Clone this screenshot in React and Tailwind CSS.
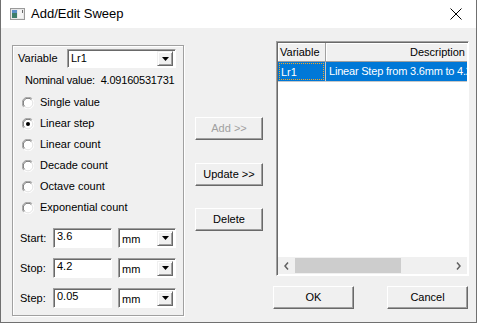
import React from "react";

const font = { fontFamily: '"Liberation Sans", Arial, sans-serif' };

function Radio({ checked }) {
    return (
        <svg width="12" height="12" viewBox="0 0 12 12" className="shrink-0">
            <circle cx="6" cy="6" r="5.5" fill="#ffffff" />
            <path d="M1.8 10.2 A5.5 5.5 0 0 1 10.2 1.8" fill="none" stroke="#a0a0a0" strokeWidth="1" />
            <path d="M10.2 1.8 A5.5 5.5 0 0 1 1.8 10.2" fill="none" stroke="#ffffff" strokeWidth="1" />
            <path d="M2.6 9.4 A4.6 4.6 0 0 1 9.4 2.6" fill="none" stroke="#696969" strokeWidth="1" />
            <path d="M9.4 2.6 A4.6 4.6 0 0 1 2.6 9.4" fill="none" stroke="#e3e3e3" strokeWidth="1" />
            {checked && <circle cx="6" cy="6" r="2" fill="#000000" />}
        </svg>
    );
}

function DropButton() {
    return (
        <div className="w-[16px] h-[15px] bg-[#f0f0f0] border border-t-[#f0f0f0] border-l-[#f0f0f0] border-b-[#696969] border-r-[#696969] shadow-[inset_1px_1px_0_#ffffff,inset_-1px_-1px_0_#a0a0a0] flex items-center justify-center">
            <svg width="7" height="4" viewBox="0 0 7 4">
                <path d="M0 0 H7 L3.5 4 Z" fill="#000000" />
            </svg>
        </div>
    );
}

function Combo({ value, width }) {
    return (
        <div
            className={`h-[19px] bg-white border border-t-[#a0a0a0] border-l-[#a0a0a0] border-b-white border-r-white shadow-[inset_1px_1px_0_#696969] flex items-center justify-between pl-[3px] pr-[2px] ${width}`}
        >
            <span className="text-[11px] leading-none text-black">{value}</span>
            <DropButton />
        </div>
    );
}

function UnitCombo() {
    return (
        <div className="w-[58px] h-[20px] bg-white border border-t-[#a0a0a0] border-l-[#a0a0a0] border-b-white border-r-white shadow-[inset_1px_1px_0_#696969] flex items-center justify-between pl-[3px] pr-[2px]">
            <span className="text-[11px] leading-none text-black pt-[3px]">mm</span>
            <DropButton />
        </div>
    );
}

function Field({ label, value }) {
    return (
        <div className="flex items-center h-[20px]">
            <span className="w-[40px] pl-[7px] text-[11px] text-black">{label}</span>
            <div className="w-[59px] h-[20px] bg-white border border-t-[#a0a0a0] border-l-[#a0a0a0] border-b-white border-r-white shadow-[inset_1px_1px_0_#696969] pl-[3px] text-[11px] leading-[15px] text-black">
                {value}
            </div>
            <div className="ml-[6px]">
                <UnitCombo />
            </div>
        </div>
    );
}

function Button({ children, disabled, className = "" }) {
    return (
        <div
            className={`h-[23px] bg-[#f0f0f0] border border-t-white border-l-white border-b-[#696969] border-r-[#696969] shadow-[inset_-1px_-1px_0_#a0a0a0] flex items-center justify-center text-[11px] ${
                disabled ? "text-[#a0a0a0]" : "text-black"
            } ${className}`}
        >
            {children}
        </div>
    );
}

const options = [
    ["Single value", false],
    ["Linear step", true],
    ["Linear count", false],
    ["Decade count", false],
    ["Octave count", false],
    ["Exponential count", false],
];

export default function App() {
    return (
        <div className="w-[478px] h-[329px] bg-white overflow-hidden" style={font}>
            <div className="w-[477px] h-[323px] border-l border-r border-b border-[#707070] flex flex-col">
                {/* Title bar */}
                <div className="h-[28px] shrink-0 bg-white flex items-center pl-[9px] pr-[12px]">
                    <svg width="15" height="12" viewBox="0 0 15 12" className="mr-[6px]">
                        <rect x="0.5" y="0.5" width="14" height="11" fill="#e8e8e8" stroke="#9a9a9a" />
                        <rect x="2" y="2" width="5" height="8" fill="#3c7d6a" />
                        <rect x="2" y="2" width="5" height="3" fill="#5a8fc8" />
                        <rect x="8" y="2" width="5" height="8" fill="#f4f4f4" />
                        <rect x="12" y="2" width="1" height="3" fill="#6a6a6a" />
                    </svg>
                    <span className="text-[13px] text-black">Add/Edit Sweep</span>
                    <svg width="12" height="12" viewBox="0 0 12 12" className="ml-auto mr-[2px]">
                        <path d="M0.5 0.5 L11.5 11.5 M11.5 0.5 L0.5 11.5" stroke="#000000" strokeWidth="1" />
                    </svg>
                </div>

                {/* Body */}
                <div className="flex-1 bg-[#f0f0f0] flex items-start pl-[11px] pt-[13px]">
                    {/* Sweep group */}
                    <div className="mt-[4px] w-[172px] h-[271px] border border-[#a0a0a0] shadow-[1px_1px_0_#ffffff,inset_1px_1px_0_#ffffff] flex flex-col pt-[3px]">
                        <div className="flex items-center">
                            <span className="w-[54px] pl-[5px] text-[11px] text-black">Variable</span>
                            <Combo value="Lr1" width="w-[109px]" />
                        </div>
                        <div className="mt-[6px] h-[13px] pl-[12px] text-[11px] leading-[13px] tracking-[-0.2px] text-black">
                            Nominal value:&nbsp; 4.09160531731
                        </div>
                        <div className="mt-[5px] flex flex-col">
                            {options.map(([label, checked]) => (
                                <div key={label} className="h-[21px] flex items-center gap-[6px] pl-[9px]">
                                    <Radio checked={checked} />
                                    <span className="text-[11px] text-black">{label}</span>
                                </div>
                            ))}
                        </div>
                        <div className="mt-[10px] flex flex-col gap-[10px]">
                            <Field label="Start:" value="3.6" />
                            <Field label="Stop:" value="4.2" />
                            <Field label="Step:" value="0.05" />
                        </div>
                    </div>

                    {/* Middle buttons */}
                    <div className="ml-[11px] mt-[76px] w-[68px] flex flex-col gap-[23px]">
                        <Button disabled>Add &gt;&gt;</Button>
                        <Button>Update &gt;&gt;</Button>
                        <Button className="-mt-[1px]">Delete</Button>
                    </div>

                    {/* Right column */}
                    <div className="ml-[13px] w-[193px] flex flex-col">
                        <div className="h-[235px] bg-white border border-t-[#a0a0a0] border-l-[#a0a0a0] border-b-white border-r-white shadow-[inset_1px_1px_0_#696969] flex flex-col overflow-hidden p-[1px]">
                            <div className="flex h-[19px] shrink-0">
                                <div className="w-[48px] bg-[#f0f0f0] border-r border-b border-[#a0a0a0] shadow-[inset_1px_1px_0_#ffffff] pl-[2px] text-[11px] leading-[18px] text-black">
                                    Variable
                                </div>
                                <div className="flex-1 bg-[#f0f0f0] border-b border-[#a0a0a0] shadow-[inset_1px_1px_0_#ffffff] pr-[2px] text-right text-[11px] leading-[18px] text-black">
                                    Description
                                </div>
                            </div>
                            <div className="flex h-[20px] shrink-0 bg-[#0078d7] border-b border-[#c8c8c8]">
                                <div className="w-[48px] border-r border-[#c8c8c8] p-[1px]">
                                    <div className="h-full border border-dotted border-[#f5a623] text-[11px] leading-[16px] text-white pl-[1px]">
                                        Lr1
                                    </div>
                                </div>
                                <div className="flex-1 min-w-0 pl-[3px] text-[11px] leading-[19px] tracking-[-0.2px] text-white whitespace-nowrap overflow-hidden">
                                    Linear Step from 3.6mm to 4.2
                                </div>
                            </div>
                            <div className="flex-1" />
                            <div className="h-[17px] shrink-0 bg-[#f0f0f0] flex items-center">
                                <div className="w-[17px] flex items-center justify-center">
                                    <svg width="5" height="8" viewBox="0 0 5 8">
                                        <path d="M4 0.5 L1 4 L4 7.5" fill="none" stroke="#606060" strokeWidth="1.5" />
                                    </svg>
                                </div>
                                <div className="w-[106px] h-[15px] bg-[#cdcdcd]" />
                                <div className="flex-1" />
                                <div className="w-[17px] flex items-center justify-center">
                                    <svg width="5" height="8" viewBox="0 0 5 8">
                                        <path d="M1 0.5 L4 4 L1 7.5" fill="none" stroke="#606060" strokeWidth="1.5" />
                                    </svg>
                                </div>
                            </div>
                        </div>
                        <div className="mt-[10px] flex justify-between -ml-[3px] mr-[1px]">
                            <Button className="w-[81px]">OK</Button>
                            <Button className="w-[81px]">Cancel</Button>
                        </div>
                    </div>
                </div>
            </div>
        </div>
    );
}
